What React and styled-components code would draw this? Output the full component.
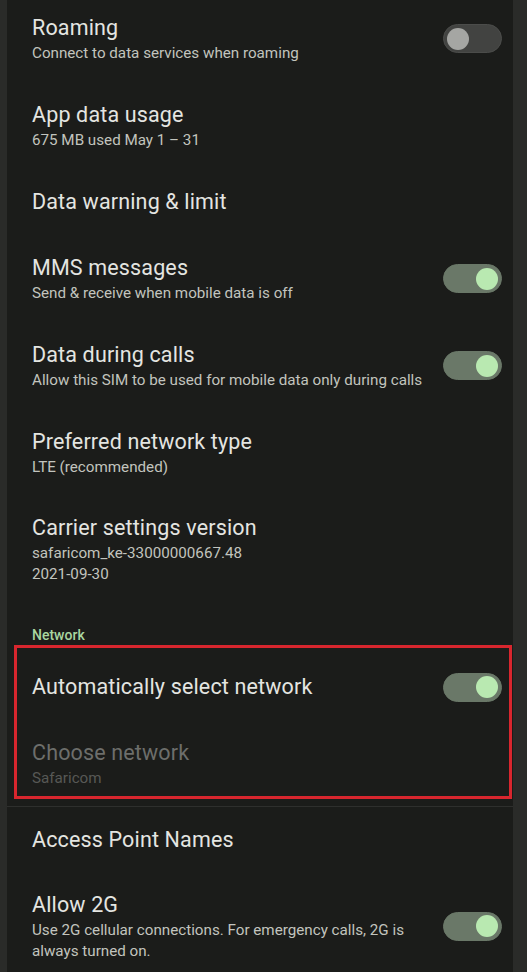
import React from "react";
import styled, { createGlobalStyle } from "styled-components";

const Global = createGlobalStyle`
  html, body { margin: 0; padding: 0; background: #2a2b29; }
  body { font-family: Roboto, "Noto Sans", sans-serif; -webkit-font-smoothing: antialiased; }
`;

const Frame = styled.div`
  width: 527px;
  height: 972px;
  overflow: hidden;
  background: #2a2b29;
  display: flex;
  align-items: flex-start;
  padding: 0 14px 0 7px;
  box-sizing: border-box;
`;

const Panel = styled.div`
  flex: 1;
  background: #1b1c1a;
  display: flex;
  flex-direction: column;
  margin-top: -5px;
  min-height: 990px;
  & > * { flex-shrink: 0; }
`;

const Row = styled.div`
  display: flex;
  align-items: center;
  padding-top: ${(p) => p.$pt ?? 17}px;
  padding-bottom: ${(p) => p.$pb ?? 17}px;
  padding-left: ${(p) => (p.$boxed ? 15 : 25)}px;
  padding-right: ${(p) => (p.$boxed ? 7 : 11)}px;
  min-height: ${(p) => (p.$lines > 1 ? 53 : 32)}px;
  flex-shrink: 0;
`;

const Texts = styled.div`
  flex: 1;
  display: flex;
  flex-direction: column;
  min-width: 0;
`;

const Title = styled.div`
  font-family: Roboto, "Noto Sans", sans-serif;
  font-size: 21.5px;
  line-height: 30px;
  color: ${(p) => (p.$disabled ? "#6d6e6b" : "#e4e5e1")};
  letter-spacing: 0.15px;
`;

const Sub = styled.div`
  font-family: Roboto, "Noto Sans", sans-serif;
  font-size: 15.2px;
  line-height: 21px;
  color: ${(p) => (p.$disabled ? "#575855" : "#c2c4be")};
  &:first-of-type { margin-top: 2px; }
`;

const Track = styled.div`
  width: 59px;
  height: 29px;
  border-radius: 15px;
  flex-shrink: 0;
  margin-left: 10px;
  box-sizing: border-box;
  display: flex;
  align-items: center;
  justify-content: ${(p) => (p.$on ? "flex-end" : "flex-start")};
  padding: 0 3px;
  background: ${(p) => (p.$on ? "#6a7868" : "#424341")};
  border: 1px solid ${(p) => (p.$on ? "#6a7868" : "#4b4c4a")};
`;

const Thumb = styled.div`
  width: 22px;
  height: 22px;
  border-radius: 50%;
  background: ${(p) => (p.$on ? "#b9e9b1" : "#a5a6a3")};
`;

const Header = styled.div`
  padding: 23px 0 0 25px;
  font-family: Roboto, "Noto Sans", sans-serif;
  font-size: 14px;
  line-height: 20px;
  font-weight: 500;
  color: #a9d6a0;
`;

const Highlight = styled.div`
  margin: 0 1px 0 7px;
  border: 3px solid #d8262e;
  display: flex;
  flex-direction: column;
`;

const Divider = styled.div`
  height: 1px;
  background: #2e2f2d;
  margin-top: 7px;
`;

const Toggle = ({ on }) => (
  <Track $on={on}>
    <Thumb $on={on} />
  </Track>
);

const Item = ({ title, subs = [], toggle, disabled, boxed, pt, pb }) => (
  <Row $lines={subs.length + 1} $boxed={boxed} $pt={pt} $pb={pb}>
    <Texts>
      <Title $disabled={disabled}>{title}</Title>
      {subs.map((s, i) => (
        <Sub key={i} $disabled={disabled}>
          {s}
        </Sub>
      ))}
    </Texts>
    {toggle !== undefined && <Toggle on={toggle} />}
  </Row>
);

export default function App() {
  return (
    <>
      <Global />
      <Frame>
        <Panel>
          <Item title="Roaming" subs={["Connect to data services when roaming"]} toggle={false} />
          <Item title="App data usage" subs={["675 MB used May 1 – 31"]} />
          <Item title="Data warning & limit" />
          <Item title="MMS messages" subs={["Send & receive when mobile data is off"]} toggle={true} />
          <Item
            title="Data during calls"
            subs={["Allow this SIM to be used for mobile data only during calls"]}
            toggle={true}
          />
          <Item title="Preferred network type" subs={["LTE (recommended)"]} />
          <Item title="Carrier settings version" subs={["safaricom_ke-33000000667.48", "2021-09-30"]} />
          <Header>Network</Header>
          <Highlight>
            <Item title="Automatically select network" toggle={true} boxed pt={23} pb={17} />
            <Item title="Choose network" subs={["Safaricom"]} disabled boxed pt={17} pb={6} />
          </Highlight>
          <Divider />
          <Item title="Access Point Names" />
          <Item
            title="Allow 2G"
            subs={["Use 2G cellular connections. For emergency calls, 2G is always turned on."]}
            toggle={true}
          />
        </Panel>
      </Frame>
    </>
  );
}
